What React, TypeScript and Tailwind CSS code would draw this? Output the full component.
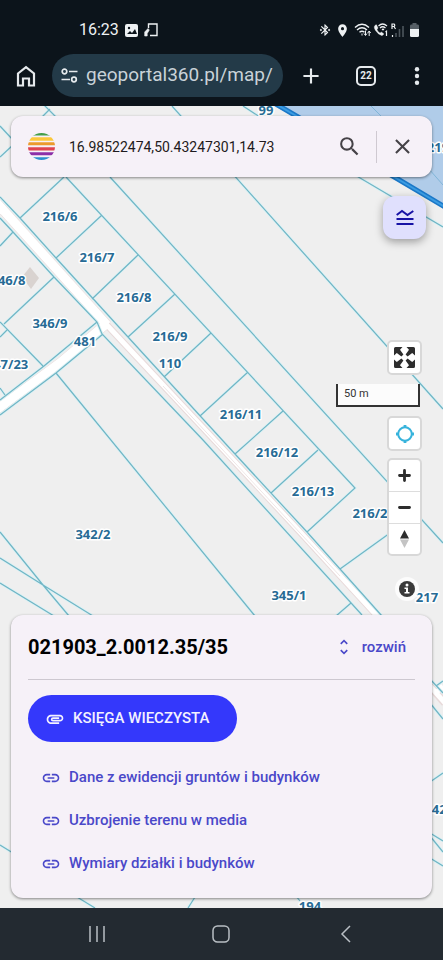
import type { ReactNode } from "react";
import { MdAdd, MdAttachment, MdBluetoothConnected, MdClose, MdLink, MdLocationOn, MdSearch, MdUnfoldMore } from "react-icons/md";

const boundaries = [
  "M64 177 20 218M66 177 355 488 307 532M110 177 443 543",
  "M172 106 443 409M43 104 57 118M50 109 42 117",
  "M0 126 13 140M0 157 13 145",
  "M243 106 260 117M355 175 443 227",
  "M0 197 20 218 56 258 128 337 235 454 307 532 382 616",
  "M0 218 13 232 54 277 97 322 102 334 203 440 362 615",
  "M13 232 0 246M102 215 56 258M138 255 92 299M175 294 128 337M211 333 164 377",
  "M248 372 200 416M283 411 235 454M318 450 271 493M340 569 390 533",
  "M54 277 4 324M0 322 43 366M7 330 0 337M0 388 5 395",
  "M97 322 44 366 0 400M103 334 56 373 0 415",
  "M56 373 255 616M0 532 43 585 69 616M0 558 43 585 93 616M0 583 54 616",
  "M351 603 336 616M0 845 13 853M77 897 95 908M195 897 188 908M296 896 300 901",
  "M430 679 443 693M430 703 443 719M436 686 443 681M430 782 443 773",
  "M430 833 443 841M430 836 443 852M430 858 443 866",
];

const parcels: [string, number, number][] = [
  ["99", 266, 110],
  ["219", 438, 147],
  ["216/6", 60, 216],
  ["216/7", 97, 257],
  ["216/8", 134, 297],
  ["216/9", 170, 336],
  ["110", 170, 363],
  ["481", 85, 341],
  ["346/9", 50, 323],
  ["346/8", 8, 280],
  ["347/23", 7, 364],
  ["216/11", 241, 414],
  ["216/12", 277, 452],
  ["216/13", 313, 491],
  ["216/2", 370, 513],
  ["342/2", 93, 534],
  ["345/1", 289, 595],
  ["217", 427, 597],
  ["429", 443, 809],
  ["194", 310, 906],
];

function ParcelMap() {
  return (
    <svg className="absolute inset-0 h-full w-full" viewBox="0 106 443 802" preserveAspectRatio="xMinYMin slice" aria-label="Mapa działek">
      <rect y="106" width="443" height="802" fill="#efefef" />
      <path d="M274 106 296 117 391 177 443 207V106Z" fill="#b0cce9" />
      <path d="M22 277 30 267 39 278 31 289Z" fill="#d9d3d0" />
      <g fill="none" stroke="#e8dada">
        <path d="M-4 202 107 325" strokeWidth="10" />
        <path d="M105 325 60 363-4 410" strokeWidth="10" />
        <path d="M105 323 163 385 221 447 301 533 378 617" strokeWidth="7" />
        <path d="M430 686 445 703" strokeWidth="8" />
      </g>
      <g fill="none" stroke="#fff">
        <path d="M-4 202 107 325" strokeWidth="9" />
        <path d="M105 325 60 363-4 410" strokeWidth="9" />
        <path d="M105 323 163 385 221 447 301 533 378 617" strokeWidth="5" />
        <path d="M430 686 445 703M436 693 443 686" strokeWidth="5" />
      </g>
      <path d="M163 386 221 448 301 534 340 576" fill="none" stroke="#efe6e6" strokeWidth="1" />
      <g fill="none">
        <path d={boundaries.join("")} stroke="#dcf1f4" strokeWidth="3" />
        <path d={boundaries.join("")} stroke="#70b5c5" strokeWidth="1.2" />
        <path d="M371 106 382 117M429 169 443 185" stroke="#80b5d8" />
        <path d="M276 104 298 117 391 175 445 207" stroke="#1b78c8" strokeWidth="5" />
        <path d="M276 104 298 117 391 175 445 207" stroke="#3b9ce2" strokeWidth="2" />
      </g>
      <g className="font-['Open_Sans','Noto_Sans',sans-serif] text-[13px] font-bold" fill="#276b95" stroke="#fff" strokeWidth="3" strokeLinejoin="round" paintOrder="stroke" textAnchor="middle">
        {parcels.map(([name, x, y]) => (
          <text key={name} x={x} y={y + 5}>{name}</text>
        ))}
      </g>
    </svg>
  );
}

function StatusBar() {
  return (
    <div className="flex h-5 items-center pr-6 pl-[79px] text-[#eef1f3]">
      <time className="text-base">16:23</time>
      <svg className="ml-1.5 h-[13px] w-[13px]" viewBox="0 0 13 13">
        <rect width="13" height="13" rx="2" fill="currentColor" />
        <path d="M2 10 5 7l2 2 3-4 2 5Z" fill="#0c141b" />
        <circle cx="4" cy="4" r="1.2" fill="#0c141b" />
      </svg>
      <svg className="ml-1.5 h-[14px] w-[14px]" viewBox="0 0 14 14" fill="none" stroke="currentColor" strokeWidth="1.4">
        <path d="M4.500 5V1H13V12.500H6" />
        <path d="M.7 13V9L4 5.500 5.300 7 3.200 10.500V13Z" fill="currentColor" strokeWidth=".6" />
      </svg>
      <MdBluetoothConnected className="ml-auto h-[14px] w-[14px]" />
      <MdLocationOn className="ml-[3px] h-[15px] w-[15px]" />
      <svg className="ml-1 h-[14px] w-[17px]" viewBox="0 0 17 14" fill="none" stroke="currentColor" strokeWidth="1.400">
        <path d="M1 4.500Q8-2 15 4.500M3 7Q8 2.500 13 7M5.500 9.300Q8 7 10.500 9.300" />
        <path d="M8 10.500V12.500M11.500 7.500V12M10 10.500l1.500 2 1.500-2M15.200 13V8.500M13.700 10l1.500-2 1.500 2" strokeWidth="1" />
      </svg>
      <svg className="ml-0.5 h-[14px] w-[15px]" viewBox="0 0 15 14" fill="none" stroke="currentColor" strokeWidth="1.2">
        <path d="M2.500 2Q0 3.500 2.500 7.500T9 12.700l2-1.700-2.500-2-1.500 1Q4.500 8.500 4 6.500L5 5 3.500 1.700Z" fill="currentColor" strokeWidth=".3" />
        <path d="M5.500 3Q9.500-1 14 3M7 5Q9.500 2.500 12.500 5M9 7l1-1 1 1M12.500 9l1-.8V13" />
      </svg>
      <svg className="ml-[3px] h-[15px] w-[13px]" viewBox="0 0 13 15" fill="none" stroke="currentColor">
        <path d="M1 6V1H3Q4.500 2.200 3 3.500H1M3 3.500 4.500 6M1.500 12v2" strokeWidth="1.2" />
        <path d="M5 10v4M8.500 6v8M12 3v11" stroke="#4d565d" strokeWidth="1.6" />
      </svg>
      <svg className="ml-[6px] h-[14px] w-[9px]" viewBox="0 0 9 14">
        <path d="M2.500 0h4v1.500H8Q9 1.500 9 3V6H0V3Q0 1.500 1 1.500h1.500Z" fill="#565f66" />
        <path d="M0 6h9v6.500Q9 14 7.500 14h-6Q0 14 0 12.500Z" fill="currentColor" />
      </svg>
    </div>
  );
}

function BrowserBar() {
  return (
    <div className="mt-3.5 flex h-[43px] items-center pr-[17px] pl-4 text-[#e6eaed]">
      <button type="button" aria-label="Strona główna" className="w-5">
        <svg className="h-[22px] w-5" viewBox="0 0 20 22" fill="none" stroke="currentColor" strokeWidth="2.2">
          <path d="M2 8.500 10 2.200l8 6.300V20.500H13V13.500H7v7H2Z" />
        </svg>
      </button>
      <div className="ml-4 flex h-full min-w-0 flex-1 items-center rounded-full bg-[#233a48] pr-[10px] pl-[9px]">
        <button type="button" aria-label="Informacje o witrynie">
          <svg className="h-[15px] w-[17px]" viewBox="0 0 17 15" fill="none" stroke="currentColor" strokeWidth="1.7">
            <circle cx="3.500" cy="3.500" r="2.300" />
            <path d="M8 3.500h8.500M.5 11.500H9" />
            <circle cx="13" cy="11.500" r="2.300" />
          </svg>
        </button>
        <input aria-label="Adres strony" defaultValue="geoportal360.pl/map/" className="ml-2 w-full min-w-0 bg-transparent text-[19px] text-[#c9d2d8] outline-none" />
      </div>
      <button type="button" aria-label="Nowa karta" className="ml-[15px]">
        <MdAdd className="h-[26px] w-[26px]" />
      </button>
      <button type="button" aria-label="Karty" className="ml-8 flex h-5 w-5 items-center justify-center rounded-[5px] border-2 border-current text-[10px] font-bold">22</button>
      <button type="button" aria-label="Menu" className="ml-8">
        <svg className="h-[18px] w-[18px]" viewBox="0 0 18 18" fill="currentColor">
          <circle cx="9" cy="2.300" r="2.200" />
          <circle cx="9" cy="9" r="2.200" />
          <circle cx="9" cy="15.700" r="2.200" />
        </svg>
      </button>
    </div>
  );
}

function SearchBar() {
  return (
    <form className="relative mx-[11px] mt-2.5 flex h-[61px] items-center rounded-xl bg-[#f6f1f8] pl-[17px] shadow-[0_1px_3px_rgba(0,0,0,.45)]">
      <svg className="h-[27px] w-[27px] shrink-0" viewBox="0 0 27 27">
        <clipPath id="globe"><circle cx="13.500" cy="13.500" r="13.500" /></clipPath>
        <g clipPath="url(#globe)">
          <path fill="#449e48" d="M0 0h27v2.500H0z" />
          <path fill="#fbc83c" d="M0 4.200h27v3.500H0z" />
          <path fill="#eb9a2d" d="M0 9.300h27v3H0z" />
          <path fill="#df4450" d="M0 14.300h27v3.200H0z" />
          <path fill="#8c2fa8" d="M0 19.200h27v3H0z" />
          <path fill="#2c8fce" d="M0 24.300h27v3H0z" />
        </g>
      </svg>
      <input aria-label="Szukaj działki" defaultValue="16.98522474,50.43247301,14.73" className="ml-3.5 min-w-0 flex-1 bg-transparent text-sm text-[#1e1b20] outline-none" />
      <button type="button" aria-label="Szukaj" className="px-3.5 text-[#454247]">
        <MdSearch className="h-[25px] w-[25px]" />
      </button>
      <span className="h-8 w-px bg-[#cfc9d1]" />
      <button type="button" aria-label="Wyczyść" className="pr-[17px] pl-[13px] text-[#454247]">
        <MdClose className="h-[25px] w-[25px]" />
      </button>
    </form>
  );
}

const controlBox = "box-content rounded-[5px] border-2 border-[#d8d8d8] bg-white text-[#2d2d2d]";
const cornerArrow = "M0 8.500V1.500Q0 0 1.500 0H8.500L6 2.800 9.400 7.400 7.400 9.400 2.800 6Z";

function MapControls() {
  return (
    <div className="relative mt-auto flex flex-col items-end pr-[21px]">
      <button type="button" aria-label="Pełny ekran" className={controlBox + " flex h-[31px] w-[31px] items-center justify-center"}>
        <svg className="h-[21px] w-[21px]" viewBox="0 0 21 21" fill="currentColor">
          <path d={cornerArrow} />
          <path d={cornerArrow} transform="matrix(-1 0 0 1 21 0)" />
          <path d={cornerArrow} transform="matrix(1 0 0 -1 0 21)" />
          <path d={cornerArrow} transform="rotate(180 10.500 10.500)" />
        </svg>
      </button>
      <div className="mt-[9px] mr-0.5 h-[23px] w-[84px] border-2 border-t-0 border-[#333] bg-white/80 pl-1.5 text-[11px] leading-5 text-[#333]">50 m</div>
      <button type="button" aria-label="Moja lokalizacja" className={controlBox + " mt-[9px] flex h-[31px] w-[31px] items-center justify-center"}>
        <svg className="h-5 w-5" viewBox="0 0 20 20" fill="none" stroke="#37b3dc" strokeWidth="2">
          <circle cx="10" cy="10" r="6.800" />
          <path d="M10 1V3.500M10 16.500V19M1 10H3.500M16.500 10H19" strokeWidth="2.800" />
        </svg>
      </button>
      <div className={controlBox + " mt-[7px] flex w-[31px] flex-col divide-y divide-[#dddddd]"}>
        <button type="button" aria-label="Przybliż" className="flex h-8 items-center justify-center">
          <svg className="h-[13px] w-[13px]" viewBox="0 0 12 12" stroke="currentColor" strokeWidth="2.600" strokeLinecap="round"><path d="M1.400 6h9.200M6 1.400v9.200" /></svg>
        </button>
        <button type="button" aria-label="Oddal" className="flex h-8 items-center justify-center">
          <svg className="h-[13px] w-[13px]" viewBox="0 0 12 12" stroke="currentColor" strokeWidth="2.600" strokeLinecap="round"><path d="M1.400 6h9.200" /></svg>
        </button>
        <button type="button" aria-label="Północ" className="flex h-[30px] items-center justify-center">
          <svg className="h-[18px] w-[9px]" viewBox="0 0 9 18"><path d="M0 8.500 4.500 0 9 8.500Z" fill="currentColor" /><path d="M0 9.500 4.500 18 9 9.500Z" fill="#c4c4c4" /></svg>
        </button>
      </div>
      <button type="button" aria-label="Informacje o mapie" className="mt-[21px] mr-[3px] flex h-6 w-6 items-center justify-center rounded-full bg-white/80">
        <svg className="h-4 w-4" viewBox="0 0 16 16">
          <circle cx="8" cy="8" r="8" fill="#3b3b3b" />
          <circle cx="8" cy="4" r="1.500" fill="#fff" />
          <path d="M5.500 6.500H9V11h1.500v1.500h-5V11H7V8H5.500Z" fill="#fff" />
        </svg>
      </button>
    </div>
  );
}

function PlotLink({ children }: { children: ReactNode }) {
  return (
    <a href="#" className="flex h-[43px] items-center gap-2 text-[15px] font-medium text-[#4a48c9]">
      <MdLink className="h-5 w-5" />
      {children}
    </a>
  );
}

function PlotCard() {
  return (
    <section className="relative mx-[11px] mt-3.5 mb-2.5 rounded-xl bg-[#f6f1f8] px-[17px] pb-[13px] shadow-[0_1px_3px_rgba(0,0,0,.45)]">
      <div className="flex h-[65px] items-center justify-between border-b border-[#cdc8d0] pr-[9px]">
        <h1 className="text-xl font-bold text-black">021903_2.0012.35/35</h1>
        <button type="button" className="flex items-center gap-2 text-[15px] font-medium text-[#4a48c9]">
          <MdUnfoldMore className="h-5 w-5" />
          rozwiń
        </button>
      </div>
      <button type="button" className="mt-[15px] mb-3.5 flex h-[47px] items-center gap-2 rounded-full bg-[#3438fb] pr-7 pl-[17px] text-[15px] font-medium text-[#f3f1ff]">
        <MdAttachment className="h-5 w-5" />
        KSIĘGA WIECZYSTA
      </button>
      <nav className="flex flex-col items-start pl-[13px]">
        <PlotLink>Dane z ewidencji gruntów i budynków</PlotLink>
        <PlotLink>Uzbrojenie terenu w media</PlotLink>
        <PlotLink>Wymiary działki i budynków</PlotLink>
      </nav>
    </section>
  );
}

function SystemNav() {
  return (
    <footer className="flex h-[52px] items-center justify-around px-[35px] text-[#b9bfc4]">
      <button type="button" aria-label="Ostatnie">
        <svg className="h-[18px] w-[18px]" viewBox="0 0 18 18" stroke="currentColor" strokeWidth="1.500"><path d="M2 1v16M9 1v16M16 1v16" /></svg>
      </button>
      <button type="button" aria-label="Ekran główny">
        <svg className="h-[18px] w-[18px]" viewBox="0 0 18 18" fill="none" stroke="currentColor" strokeWidth="1.500"><rect x="1" y="1" width="16" height="16" rx="4.500" /></svg>
      </button>
      <button type="button" aria-label="Wstecz">
        <svg className="h-[18px] w-[18px]" viewBox="0 0 18 18" fill="none" stroke="currentColor" strokeWidth="1.500"><path d="M13 1 5 9l8 8" /></svg>
      </button>
    </footer>
  );
}

export default function App() {
  return (
    <div className="flex min-h-screen flex-col bg-[#232a31] font-[Roboto,sans-serif]">
      <header className="bg-[#0c141b] pt-5 pb-[9px]">
        <StatusBar />
        <BrowserBar />
      </header>
      <main className="relative flex flex-1 flex-col overflow-hidden">
        <ParcelMap />
        <SearchBar />
        <button type="button" aria-label="Warstwy" className="relative mt-[19px] mr-[17px] flex h-[43px] w-[43px] items-center justify-center self-end rounded-xl bg-[#e0e0fd] shadow-[0_3px_8px_rgba(0,0,0,.35)]">
          <svg className="h-[18px] w-[18px]" viewBox="0 0 18 18" fill="none" stroke="#1712a5" strokeWidth="2">
            <path d="M.7 6 6 2 11.500 6 17.300 2M.5 10h17M.5 15h17" />
          </svg>
        </button>
        <MapControls />
        <PlotCard />
      </main>
      <SystemNav />
    </div>
  );
}
